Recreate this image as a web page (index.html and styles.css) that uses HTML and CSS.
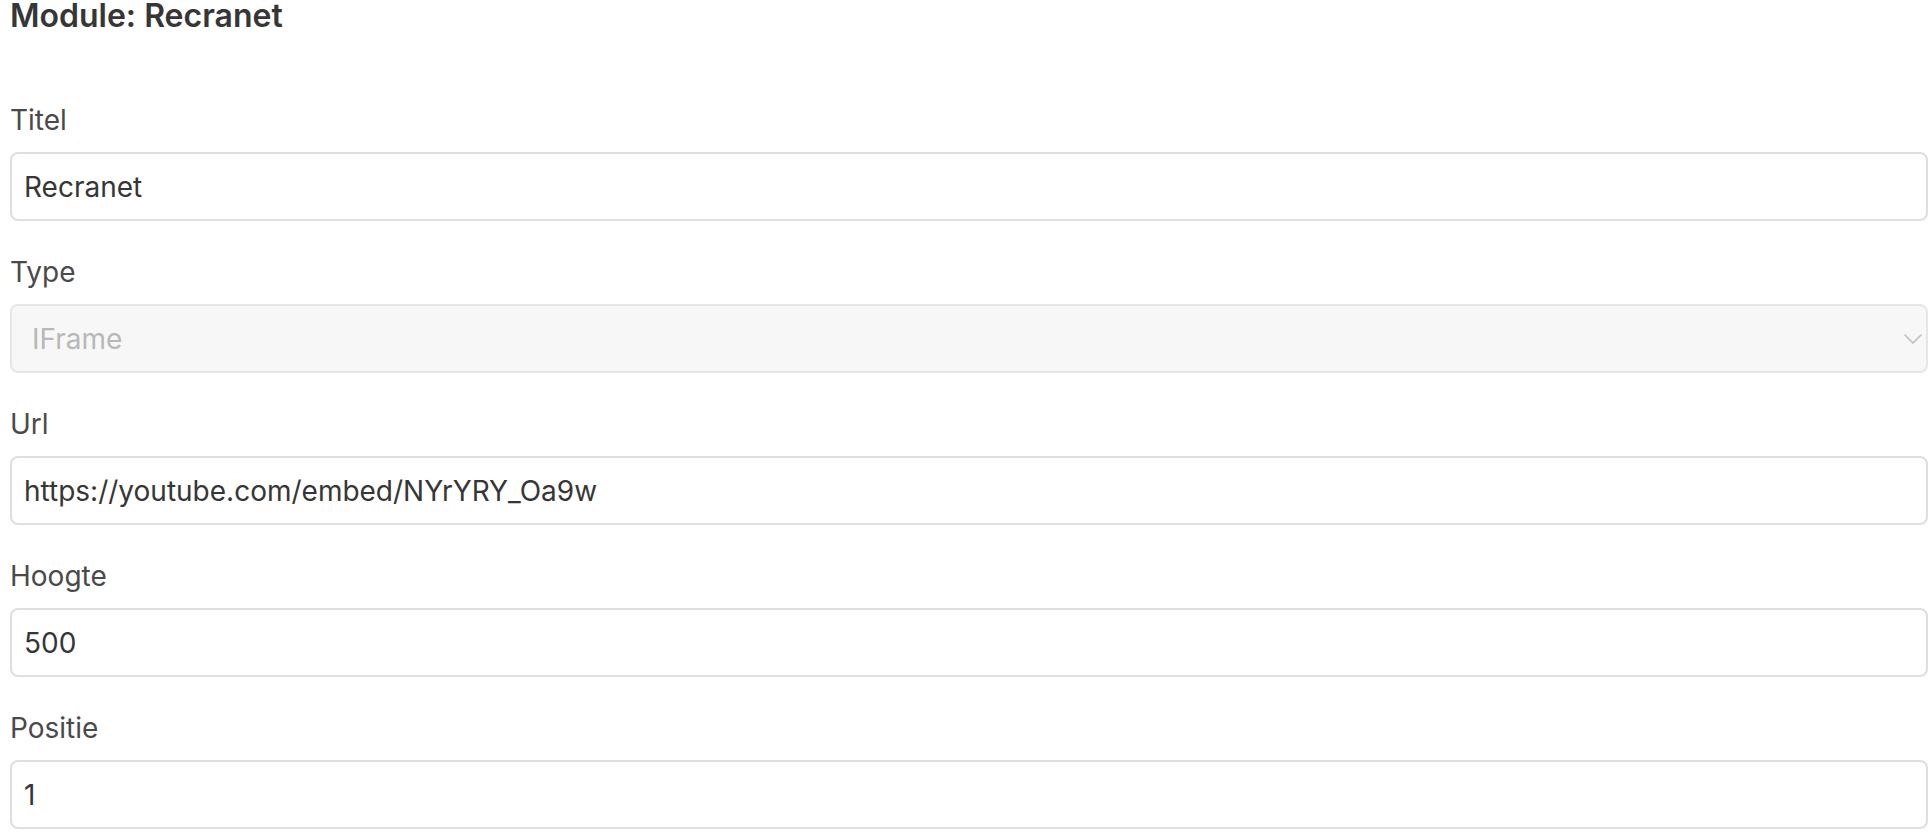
FILE: index.html
```html
<!DOCTYPE html>
<html lang="nl">
<head>
<meta charset="utf-8">
<title>Module: Recranet</title>
<link rel="stylesheet" href="styles.css">
</head>
<body>
<main class="page">
  <h1 class="title">Module: Recranet</h1>
  <form class="form">
    <div class="field">
      <label class="label" for="titel">Titel</label>
      <input class="input" id="titel" type="text" value="Recranet">
    </div>
    <div class="field">
      <label class="label" for="type">Type</label>
      <div class="select-wrap">
        <select class="select" id="type" disabled>
          <option>IFrame</option>
        </select>
        <svg class="chevron" width="18" height="10" viewBox="0 0 18 10" aria-hidden="true">
          <path d="M1 1 L9 9 L17 1" fill="none" stroke="#bdbdbd" stroke-width="1.6" stroke-linecap="round" stroke-linejoin="round"/>
        </svg>
      </div>
    </div>
    <div class="field">
      <label class="label" for="url">Url</label>
      <input class="input" id="url" type="text" value="https://youtube.com/embed/NYrYRY_Oa9w">
    </div>
    <div class="field">
      <label class="label" for="hoogte">Hoogte</label>
      <input class="input" id="hoogte" type="text" value="500">
    </div>
    <div class="field">
      <label class="label" for="positie">Positie</label>
      <input class="input" id="positie" type="text" value="1">
    </div>
  </form>
</main>
</body>
</html>
```

FILE: styles.css
```css
* {
  box-sizing: border-box;
}

html, body {
  margin: 0;
  padding: 0;
  background: #ffffff;
}

body {
  font-family: Inter, "Noto Sans", "Liberation Sans", sans-serif;
  color: #363636;
  overflow: hidden;
}

.page {
  padding-left: 10px;
  width: 1928px;
}

.title {
  margin: 0 0 67px 0;
  font-size: 32px;
  line-height: 32px;
  font-weight: 600;
  color: #363636;
}

.form {
  display: flex;
  flex-direction: column;
  gap: 30px;
}

.field {
  display: flex;
  flex-direction: column;
}

.label {
  font-size: 28px;
  line-height: 42px;
  font-weight: 400;
  color: #4a4a4a;
  margin-bottom: 11px;
}

.input,
.select {
  display: block;
  width: 100%;
  height: 69px;
  margin: 0;
  border: 2px solid #dedede;
  border-radius: 8px;
  font-family: Inter, "Noto Sans", "Liberation Sans", sans-serif;
  font-size: 28px;
  color: #363636;
  background: #ffffff;
  outline: none;
}

.input {
  padding: 0 12px;
}

.select-wrap {
  position: relative;
}

.select {
  appearance: none;
  -webkit-appearance: none;
  padding: 0 20px;
  background: #f7f7f7;
  border-color: #e6e6e6;
  color: #b8b8b8;
  opacity: 1;
}

.chevron {
  position: absolute;
  right: 6px;
  top: 30px;
  pointer-events: none;
}
```
